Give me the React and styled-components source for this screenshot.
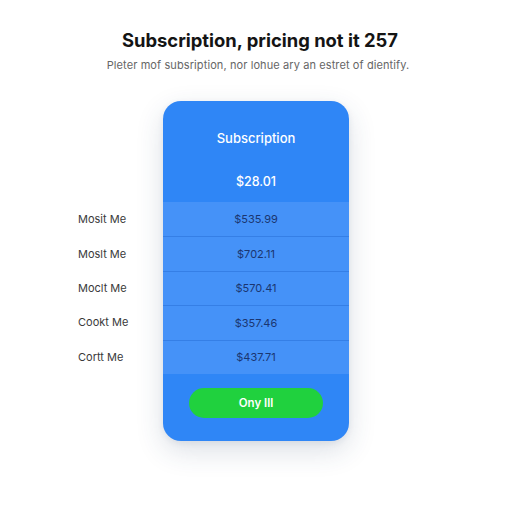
import React from "react";
import styled, { createGlobalStyle } from "styled-components";

const Global = createGlobalStyle`
  html, body {
    margin: 0;
    padding: 0;
    background: #ffffff;
  }
  body {
    font-family: "Inter", "Liberation Sans", sans-serif;
  }
`;

const Page = styled.div`
  width: 512px;
  height: 512px;
  box-sizing: border-box;
  padding-top: 29px;
  background: #fff;
`;

const Title = styled.h1`
  margin: 0;
  text-align: center;
  font-size: 18.4px;
  font-weight: 700;
  color: #141414;
  padding-left: 8px;
`;

const Subtitle = styled.p`
  margin: 7px 0 0;
  text-align: center;
  font-size: 11px;
  letter-spacing: 0.1px;
  color: #666;
  padding-left: 4px;
`;

const Layout = styled.div`
  display: grid;
  grid-template-columns: 1fr 186px 1fr;
  margin-top: 29px;
`;

const Labels = styled.ul`
  list-style: none;
  margin: 0;
  padding: 101px 0 0 78px;
`;

const Label = styled.li`
  height: 34.4px;
  display: flex;
  align-items: center;
  font-size: 11px;
  color: #3a3a3a;
`;

const Card = styled.div`
  background: #2f86f6;
  border-radius: 18px;
  overflow: hidden;
  box-shadow: 0 10px 28px rgba(40, 60, 100, 0.16), 0 2px 6px rgba(40, 60, 100, 0.08);
`;

const Header = styled.div`
  height: 101px;
  display: flex;
  flex-direction: column;
  align-items: center;
  color: #fff;
`;

const Plan = styled.div`
  margin-top: 29px;
  font-size: 13px;
  font-weight: 500;
`;

const Price = styled.div`
  margin-top: 28px;
  font-size: 12.5px;
  font-weight: 500;
`;

const Rows = styled.ul`
  list-style: none;
  margin: 0;
  padding: 0;
  background: #4592f8;
`;

const Row = styled.li`
  height: 34.4px;
  box-sizing: border-box;
  display: flex;
  align-items: center;
  justify-content: center;
  font-size: 11px;
  color: #1b3670;
  border-top: ${(p) => (p.first ? "none" : "1px solid #357fe6")};
`;

const Footer = styled.div`
  padding: 14px 26px 23px;
`;

const Button = styled.button`
  width: 100%;
  height: 30px;
  border: none;
  border-radius: 15px;
  background: #20d13e;
  color: #fff;
  font-family: inherit;
  font-size: 11.5px;
  font-weight: 600;
`;

const plans = [
  { label: "Mosit Me", price: "$535.99" },
  { label: "Moslt Me", price: "$702.11" },
  { label: "Moclt Me", price: "$570.41" },
  { label: "Cookt Me", price: "$357.46" },
  { label: "Cortt Me", price: "$437.71" },
];

export default function App() {
  return (
    <Page>
      <Global />
      <Title>Subscription, pricing not it 257</Title>
      <Subtitle>
        Pleter mof subsription, nor lohue ary an estret of dientify.
      </Subtitle>
      <Layout>
        <Labels>
          {plans.map((p) => (
            <Label key={p.label + p.price}>{p.label}</Label>
          ))}
        </Labels>
        <Card>
          <Header>
            <Plan>Subscription</Plan>
            <Price>$28.01</Price>
          </Header>
          <Rows>
            {plans.map((p, i) => (
              <Row key={p.price} first={i === 0}>
                {p.price}
              </Row>
            ))}
          </Rows>
          <Footer>
            <Button>Ony Ill</Button>
          </Footer>
        </Card>
        <div />
      </Layout>
    </Page>
  );
}
